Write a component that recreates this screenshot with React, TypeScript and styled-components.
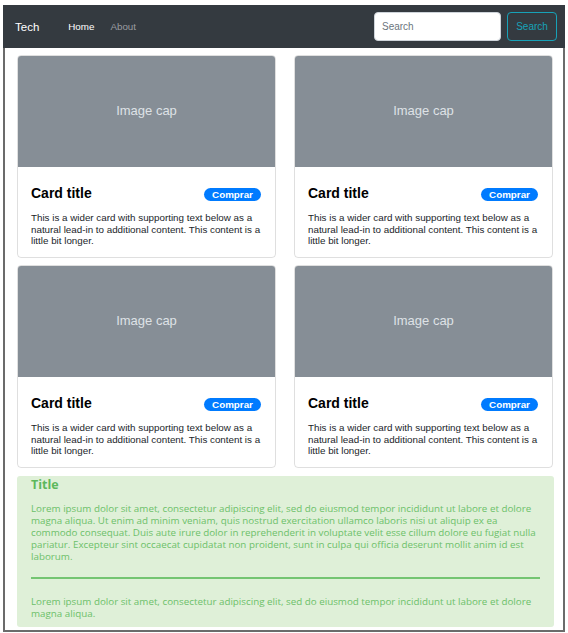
import React from "react";
import styled, { createGlobalStyle } from "styled-components";

const Global = createGlobalStyle`
  html, body { margin: 0; padding: 0; background: #fff; }
  body { font-family: "Liberation Sans", Arial, sans-serif; }
  * { box-sizing: border-box; }
`;

const Frame = styled.div`
  margin: 5px 3px 0 3px;
  width: 562px;
  height: 627px;
  border: 2px solid #6b6b6b;
  border-top: none;
  display: flex;
  flex-direction: column;
`;

const Nav = styled.nav`
  height: 43px;
  margin: 0 -2px;
  background: #343a40;
  display: flex;
  align-items: center;
  padding: 0 8px 0 12px;
`;

const Brand = styled.span`
  color: #fff;
  font-size: 11.5px;
  margin-right: 29px;
`;

const NavLink = styled.a<{ $active?: boolean }>`
  color: ${(p) => (p.$active ? "#fff" : "#9a9da0")};
  font-size: 9.8px;
  margin-right: 16px;
  text-decoration: none;
`;

const Spacer = styled.div`
  flex: 1;
`;

const SearchInput = styled.input`
  width: 127px;
  height: 29px;
  border: 1px solid #ced4da;
  border-radius: 4px;
  font-family: "Liberation Sans", Arial, sans-serif;
  font-size: 10px;
  padding: 0 7px;
  margin-right: 6px;
  &::placeholder { color: #6c757d; }
`;

const SearchButton = styled.button`
  height: 29px;
  width: 50px;
  background: transparent;
  border: 1px solid #17a2b8;
  border-radius: 4px;
  color: #17a2b8;
  font-family: "Liberation Sans", Arial, sans-serif;
  font-size: 10px;
  padding: 0;
`;

const Content = styled.div`
  padding: 7px 10px 0 12px;
  display: flex;
  flex-direction: column;
  gap: 7px;
`;

const Grid = styled.div`
  display: grid;
  grid-template-columns: 259px 259px;
  column-gap: 18px;
  row-gap: 7px;
`;

const Card = styled.div`
  height: 203px;
  border: 1px solid rgba(0, 0, 0, 0.125);
  border-radius: 4px;
  overflow: hidden;
  display: flex;
  flex-direction: column;
`;

const ImageCap = styled.div`
  height: 112px;
  background: #868e96;
  color: #dee2e6;
  font-size: 13px;
  display: flex;
  align-items: center;
  justify-content: center;
  margin: -1px -1px 0 -1px;
  padding-bottom: 2px;
`;

const CardBody = styled.div`
  padding: 17px 13px 0 13px;
`;

const TitleRow = styled.div`
  display: flex;
  align-items: center;
  justify-content: space-between;
`;

const CardTitle = styled.h5`
  margin: 0;
  font-size: 14px;
  font-weight: bold;
  color: #000;
  line-height: 16px;
`;

const Badge = styled.span`
  background: #007bff;
  color: #fff;
  font-size: 9.8px;
  font-weight: bold;
  border-radius: 7px;
  width: 57px;
  height: 13px;
  display: inline-flex;
  align-items: center;
  justify-content: center;
  margin-top: 4px;
  margin-right: 1px;
`;

const CardText = styled.p`
  margin: 11px 0 0 0;
  font-size: 9.8px;
  line-height: 11.5px;
  color: #212529;
`;

const Well = styled.div`
  width: 537px;
  height: 151px;
  background: #dff0d8;
  border-radius: 3px;
  color: #6cc069;
  padding: 1px 14px 0 14px;
  font-family: "Open Sans", sans-serif;
  margin-top: 1px;
`;

const WellTitle = styled.h3`
  margin: 0;
  font-size: 12.5px;
  font-weight: bold;
  line-height: 16px;
  color: #5cb85c;
`;

const WellText = styled.p<{ $gap: number }>`
  margin: ${(p) => p.$gap}px 0 0 0;
  font-size: 9.8px;
  line-height: 12px;
`;

const Rule = styled.hr`
  border: none;
  height: 2px;
  background: #74c572;
  margin: 14px 0 0 0;
`;

const cardText =
  "This is a wider card with supporting text below as a natural lead-in to additional content. This content is a little bit longer.";

export default function App() {
  return (
    <>
      <Global />
      <Frame>
        <Nav>
          <Brand>Tech</Brand>
          <NavLink $active>Home</NavLink>
          <NavLink>About</NavLink>
          <Spacer />
          <SearchInput placeholder="Search" />
          <SearchButton>Search</SearchButton>
        </Nav>
        <Content>
          <Grid>
            {[0, 1, 2, 3].map((i) => (
              <Card key={i}>
                <ImageCap>Image cap</ImageCap>
                <CardBody>
                  <TitleRow>
                    <CardTitle>Card title</CardTitle>
                    <Badge>Comprar</Badge>
                  </TitleRow>
                  <CardText>{cardText}</CardText>
                </CardBody>
              </Card>
            ))}
          </Grid>
          <Well>
            <WellTitle>Title</WellTitle>
            <WellText $gap={10}>
              Lorem ipsum dolor sit amet, consectetur adipiscing elit, sed do eiusmod tempor incididunt ut labore et dolore magna aliqua. Ut enim ad minim veniam, quis nostrud exercitation ullamco laboris nisi ut aliquip ex ea commodo consequat. Duis aute irure dolor in reprehenderit in voluptate velit esse cillum dolore eu fugiat nulla pariatur. Excepteur sint occaecat cupidatat non proident, sunt in culpa qui officia deserunt mollit anim id est laborum.
            </WellText>
            <Rule />
            <WellText $gap={17}>
              Lorem ipsum dolor sit amet, consectetur adipiscing elit, sed do eiusmod tempor incididunt ut labore et dolore magna aliqua.
            </WellText>
          </Well>
        </Content>
      </Frame>
    </>
  );
}
